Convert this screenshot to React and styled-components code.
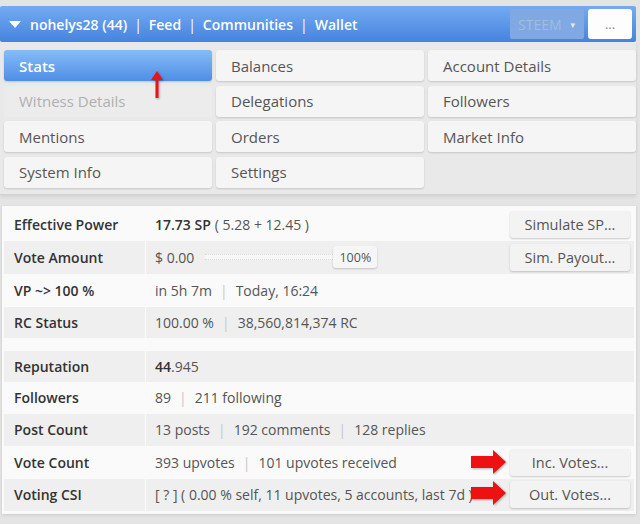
import React from "react";
import styled, { createGlobalStyle } from "styled-components";

const Global = createGlobalStyle`
  html, body { margin: 0; padding: 0; background: #e4e4e4; }
  body { font-family: "Open Sans", "DejaVu Sans", sans-serif; width: 640px; height: 524px; overflow: hidden; }
  * { box-sizing: border-box; }
`;

const Page = styled.div`
  position: relative;
  width: 640px;
  height: 524px;
  padding-top: 6px;
  background: #e4e4e4;
`;

const Header = styled.div`
  height: 36px;
  margin-right: 4px;
  border-radius: 2px;
  background: linear-gradient(#74abf2, #4683dd);
  display: flex;
  align-items: center;
  padding: 0 4px 0 9px;
  color: #fff;
  font-size: 14px;
  font-weight: 600;
`;

const Caret = styled.span`
  width: 0;
  height: 0;
  border-left: 6px solid transparent;
  border-right: 6px solid transparent;
  border-top: 7px solid #fff;
  margin-right: 9px;
  margin-top: 1px;
`;

const NavItem = styled.span`
  white-space: nowrap;
`;

const Sep = styled.span`
  margin: 0 7px;
  font-weight: 400;
`;

const Spacer = styled.div`flex: 1;`;

const CoinSelect = styled.div`
  width: 74px;
  height: 30px;
  border-radius: 2px;
  background: #80a9e4;
  color: #a3bbdd;
  font-weight: 400;
  font-size: 14px;
  display: flex;
  align-items: center;
  padding-left: 8px;
  gap: 9px;
  &::after { content: "▾"; font-size: 9px; color: #e0e9f6; }
`;

const MoreBtn = styled.div`
  width: 44px;
  height: 30px;
  margin-left: 4px;
  border-radius: 3px;
  background: #fdfdfd;
  color: #888;
  font-weight: 400;
  font-size: 13px;
  display: flex;
  align-items: center;
  justify-content: center;
`;

const MenuPanel = styled.div`
  margin-right: 4px;
  padding: 8px 0 6px 4px;
  background: #e9e9e9;
  border-bottom: 1px solid #d2d2d2;
  box-shadow: 0 2px 3px rgba(0,0,0,0.08);
  display: grid;
  grid-template-columns: repeat(3, 208px);
  grid-auto-rows: 31px;
  column-gap: 4px;
  row-gap: 4.6px;
`;

const MenuBtn = styled.div`
  border-radius: 3px;
  display: flex;
  align-items: center;
  padding-left: 15px;
  font-size: 15px;
  background: ${p => p.$active ? "linear-gradient(#86bcf6, #4f8ee6)" : p.$disabled ? "#ececec" : "#f5f5f5"};
  color: ${p => p.$active ? "#fff" : p.$disabled ? "#b0b0b0" : "#555"};
  font-weight: ${p => p.$active ? 600 : 400};
  box-shadow: ${p => p.$disabled ? "none" : "0 1px 2px rgba(0,0,0,0.15)"};
`;

const Card = styled.div`
  margin: 11px 4px 0 2px;
  padding: 2px 2px 3px 2px;
  background: #fafafa;
  box-shadow: 0 1px 3px rgba(0,0,0,0.12);
`;

const Row = styled.div`
  display: grid;
  grid-template-columns: 142px 1fr;
  height: ${p => p.$h || 33}px;
  background: ${p => p.$alt ? "#efefef" : "#fafafa"};
`;

const Label = styled.div`
  display: flex;
  align-items: center;
  padding-left: 10px;
  font-size: 14px;
  font-weight: 600;
  color: #333;
  border-right: 1px solid ${p => p.$alt ? "#fafafa" : "transparent"};
`;

const Value = styled.div`
  display: flex;
  align-items: center;
  padding-left: 9px;
  padding-right: 4px;
  font-size: 14px;
  color: #555;
  white-space: nowrap;
`;

const Strong = styled.b`
  font-weight: 600;
  color: #333;
  margin-right: ${p => p.$tight ? 0 : 4}px;
`;

const Bar = styled.span`
  color: #c8c8c8;
  margin: 0 8px;
`;

const ActionBtn = styled.div`
  margin-left: auto;
  width: 120px;
  height: 27px;
  border-radius: 3px;
  background: #f3f3f3;
  box-shadow: 0 1px 2px rgba(0,0,0,0.2);
  display: flex;
  align-items: center;
  justify-content: center;
  font-size: 14.5px;
  color: #555;
`;

const Slider = styled.div`
  width: 128px;
  height: 6px;
  margin-left: 11px;
  border-top: 1px dotted #dcdcdc;
  border-bottom: 1px dotted #dcdcdc;
  background: #f7f7f7;
`;

const PctBtn = styled.div`
  width: 44px;
  height: 22px;
  border-radius: 3px;
  background: #f6f6f6;
  box-shadow: 0 1px 2px rgba(0,0,0,0.2);
  display: flex;
  align-items: center;
  justify-content: center;
  font-size: 12.5px;
  color: #555;
`;

const Arrow = styled.svg`
  position: absolute;
  left: ${p => p.$x}px;
  top: ${p => p.$y}px;
  filter: drop-shadow(1px 1px 1px rgba(0,0,0,0.3));
`;

const menu = [
  { t: "Stats", active: true }, { t: "Balances" }, { t: "Account Details" },
  { t: "Witness Details", disabled: true }, { t: "Delegations" }, { t: "Followers" },
  { t: "Mentions" }, { t: "Orders" }, { t: "Market Info" },
  { t: "System Info" }, { t: "Settings" },
];

export default function App() {
  return (
    <Page>
      <Global />
      <Header>
        <Caret />
        <NavItem>nohelys28 (44)</NavItem>
        <Sep>|</Sep>
        <NavItem>Feed</NavItem>
        <Sep>|</Sep>
        <NavItem>Communities</NavItem>
        <Sep>|</Sep>
        <NavItem>Wallet</NavItem>
        <Spacer />
        <CoinSelect>STEEM</CoinSelect>
        <MoreBtn>...</MoreBtn>
      </Header>
      <MenuPanel>
        {menu.map(m => (
          <MenuBtn key={m.t} $active={m.active} $disabled={m.disabled}>{m.t}</MenuBtn>
        ))}
      </MenuPanel>
      <Card>
        <Row>
          <Label>Effective Power</Label>
          <Value><Strong>17.73 SP</Strong>( 5.28 + 12.45 )<ActionBtn>Simulate SP...</ActionBtn></Value>
        </Row>
        <Row $alt>
          <Label $alt>Vote Amount</Label>
          <Value>$ 0.00<Slider /><PctBtn>100%</PctBtn><ActionBtn>Sim. Payout...</ActionBtn></Value>
        </Row>
        <Row>
          <Label>VP ~&gt; 100 %</Label>
          <Value>in 5h 7m<Bar>|</Bar>Today, 16:24</Value>
        </Row>
        <Row $alt $h={31}>
          <Label $alt>RC Status</Label>
          <Value>100.00 %<Bar>|</Bar>38,560,814,374 RC</Value>
        </Row>
        <Row $h={13} />
        <Row $alt $h={31}>
          <Label $alt>Reputation</Label>
          <Value><Strong $tight>44</Strong>.945</Value>
        </Row>
        <Row $h={32}>
          <Label>Followers</Label>
          <Value>89<Bar>|</Bar>211 following</Value>
        </Row>
        <Row $alt $h={32}>
          <Label $alt>Post Count</Label>
          <Value>13 posts<Bar>|</Bar>192 comments<Bar>|</Bar>128 replies</Value>
        </Row>
        <Row $h={33}>
          <Label>Vote Count</Label>
          <Value>393 upvotes<Bar>|</Bar>101 upvotes received<ActionBtn>Inc. Votes...</ActionBtn></Value>
        </Row>
        <Row $alt $h={32}>
          <Label $alt>Voting CSI</Label>
          <Value>[ ? ] ( 0.00 % self, 11 upvotes, 5 accounts, last 7d )<ActionBtn>Out. Votes...</ActionBtn></Value>
        </Row>
      </Card>
      <Arrow $x={151} $y={71} width="12" height="28" viewBox="0 0 12 28">
        <path d="M6 0 L12 9 L7.5 9 L7.5 27 L4.5 27 L4.5 9 L0 9 Z" fill="#e8141c" />
      </Arrow>
      <Arrow $x={471} $y={450} width="36" height="24" viewBox="0 0 36 24">
        <path d="M0 6 L22 6 L22 0 L35 12 L22 24 L22 18 L0 18 Z" fill="#ee1111" />
      </Arrow>
      <Arrow $x={471} $y={481} width="36" height="24" viewBox="0 0 36 24">
        <path d="M0 6 L22 6 L22 0 L35 12 L22 24 L22 18 L0 18 Z" fill="#ee1111" />
      </Arrow>
    </Page>
  );
}
